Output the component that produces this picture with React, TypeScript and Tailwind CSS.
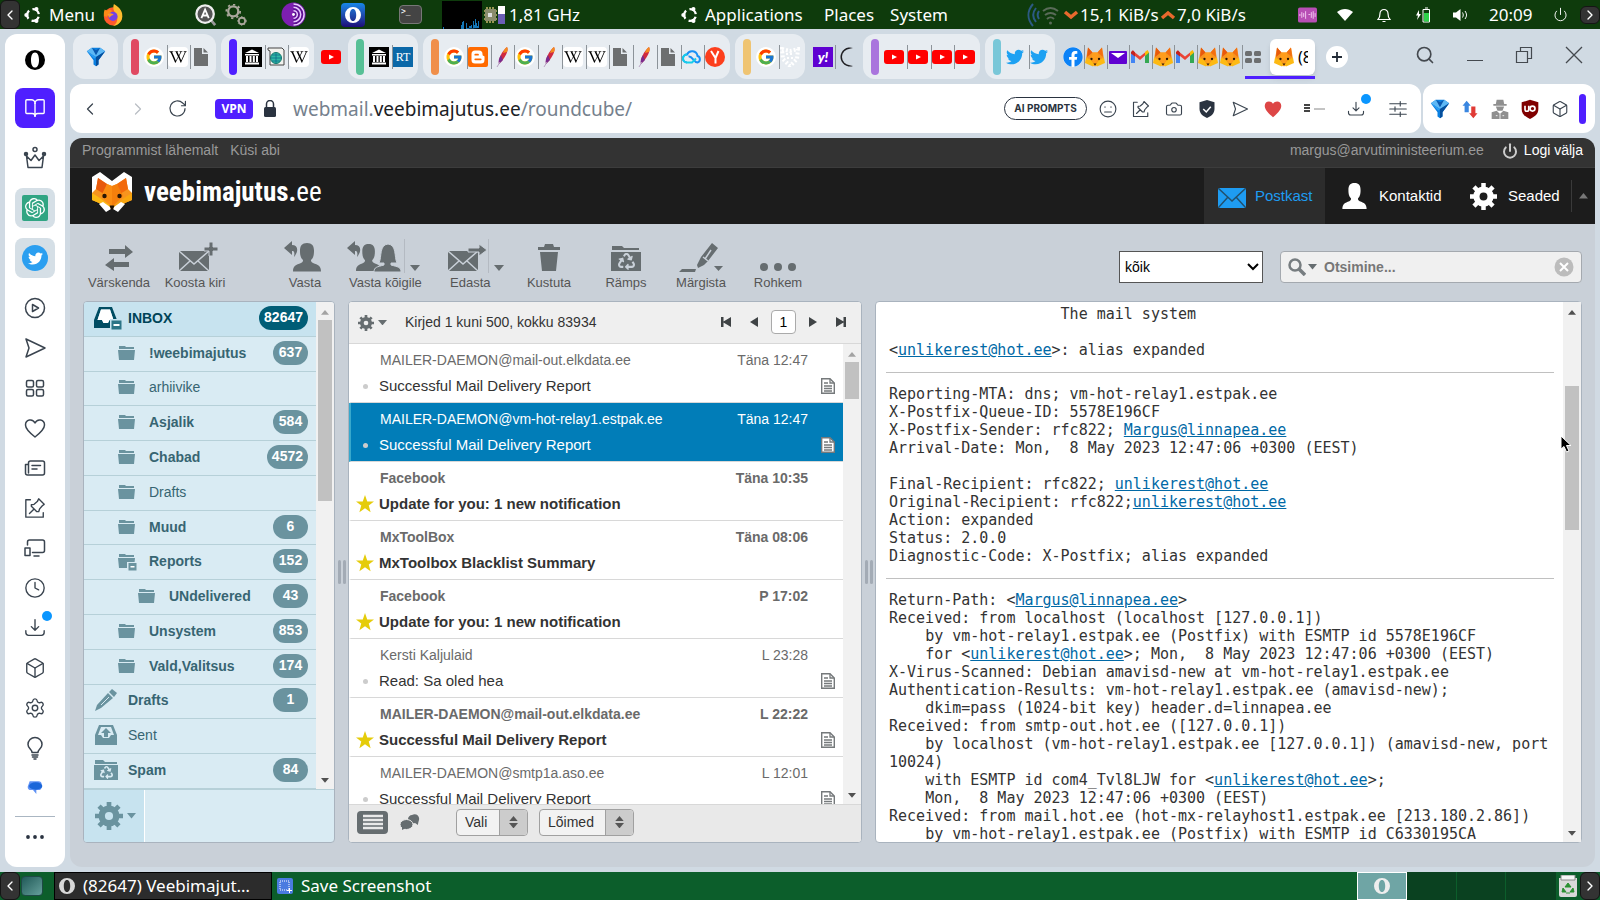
import clsx from "clsx"
import {
  BookOpen,
  Box,
  Camera,
  ChevronLeft,
  ChevronRight,
  Clock,
  Power,
  Search,
  Settings,
} from "lucide-react"
import type { FC, ReactNode } from "react"
import {
  FaFacebook,
  FaRecycle,
  FaTwitter,
  FaWikipediaW,
} from "react-icons/fa"
import { FcGoogle } from "react-icons/fc"
import { SiOpenai } from "react-icons/si"

type IconProps = { className?: string }

const Svg: FC<{ box?: string; className?: string; children: ReactNode }> = ({
  box = "0 0 24 24",
  className = "size-5",
  children,
}) => (
  <svg viewBox={box} className={clsx("shrink-0", className)} fill="none" aria-hidden>
    {children}
  </svg>
)

const Line: FC<{ className?: string; children: ReactNode }> = ({
  className = "size-6",
  children,
}) => (
  <Svg className={className}>
    <g
      stroke="currentColor"
      strokeWidth="1.5"
      strokeLinecap="round"
      strokeLinejoin="round"
    >
      {children}
    </g>
  </Svg>
)

// ---------- logos ----------

const Fox: FC<IconProps> = ({ className }) => (
  <Svg box="0 0 40 40" className={className}>
    <path d="M6 1 L15 11 H25 L34 1 L38 24 L20 39 L2 24Z" fill="#f7941e" />
    <path d="M6 1 L15 11 L4 20Z" fill="#e8590c" />
    <path d="M34 1 L25 11 L36 20Z" fill="#f36f10" />
    <path d="M15 11 H25 L28 22 L20 36 L12 22Z" fill="#ff9d1c" />
    <path d="M2 21 L12 26 L19 36 L16 39 L0 32Z" fill="#fdb913" />
    <path d="M38 21 L28 26 L21 36 L24 39 L40 32Z" fill="#fdb913" />
    <circle cx="13" cy="24" r="2.3" fill="#2a1605" />
    <circle cx="28" cy="24" r="2.3" fill="#2a1605" />
    <path d="M17 33 h6 l-3 4z" fill="#2a1605" />
  </Svg>
)

const FoxLogo = () => (
  <Svg box="0 0 40 40" className="size-10">
    <path d="M8 0 L20 9 L32 0 L40 5 V22 H0 V5Z" fill="#fff" />
    <path d="M6 6 L15 12 L20 14 L25 12 L34 6 L36 17 L40 21 V28 L33 31 L24 37 H16 L7 31 L0 28 V21 L4 17Z" fill="#f7941e" />
    <path d="M6 6 L15 12 L12 22 L4 17Z" fill="#e8590c" />
    <path d="M34 6 L25 12 L28 22 L36 17Z" fill="#f26a0c" />
    <path d="M15 12 L20 14 V35 L9 24Z" fill="#fb8d12" />
    <path d="M25 12 L20 14 V35 L31 24Z" fill="#f57f0c" />
    <path d="M0 21 L8 26 L20 35 L16 37 L7 31 L0 28Z" fill="#fdb913" />
    <path d="M40 21 L32 26 L20 35 L24 37 L33 31 L40 28Z" fill="#f9a60f" />
    <path d="M7 32 L11 30 L18 35 L19 37 L14 40Z M33 32 L29 30 L22 35 L21 37 L26 40Z" fill="#fff" />
    <circle cx="12.5" cy="24" r="2.2" fill="#2a1605" />
    <circle cx="27.5" cy="24" r="2.2" fill="#2a1605" />
    <path d="M17.500 33.500 h5 l-1.500 4 h-2z" fill="#1c1005" />
  </Svg>
)

const UbuntuMark = () => (
  <Svg box="0 0 20 20" className="size-[18px]">
    <circle
      cx="10"
      cy="10"
      r="6.5"
      stroke="#fff"
      strokeWidth="2.6"
      strokeDasharray="9.6 4"
      strokeDashoffset="-2"
    />
    <circle cx="2.6" cy="10" r="2.3" fill="#fff" />
    <circle cx="13.8" cy="3.4" r="2.3" fill="#fff" />
    <circle cx="13.8" cy="16.6" r="2.3" fill="#fff" />
  </Svg>
)

const Firefox = () => (
  <Svg className="size-[22px]">
    <circle cx="12" cy="13.5" r="10" fill="#ff5a2b" />
    <path d="M13 0 C20 4 23 9 22 15 C21 20 17 24 12 24 C19 20 17 12 14 9 C12 6 12 3 13 0Z" fill="#ffbd2e" />
    <path d="M3 6 C4 7 5 7 6 7 C8 5 10 6 11 8 L5 14 L2 13 C2 10 2 8 3 6Z" fill="#ff8a16" />
    <circle cx="12" cy="13.5" r="5" fill="#7542e5" />
    <path d="M6 11 C9 9 12 11 13 12 C10 12 9 14 8 15Z" fill="#ff9a2a" />
  </Svg>
)

const OperaRing: FC<IconProps & { color?: string }> = ({ className, color = "#000" }) => (
  <Svg box="0 0 20 20" className={className}>
    <path
      fillRule="evenodd"
      d="M10 0a10 10 0 1 0 0 20 10 10 0 0 0 0-20Zm0 2.4c2.7 0 4 3.4 4 7.6s-1.300 7.600-4 7.600-4-3.400-4-7.600 1.300-7.600 4-7.600Z"
      fill={color}
    />
  </Svg>
)

const Tor = () => (
  <Svg box="0 0 26 26" className="size-[25px]">
    <circle cx="13" cy="13" r="12.500" fill="#7d1fb0" />
    <path d="M13 .5a12.500 12.500 0 0 1 0 25Z" fill="#5d0f92" />
    <g stroke="#e9c8ff" strokeWidth="1.600">
      <path d="M13 5.500a7.500 7.500 0 0 1 0 15M13 9a4 4 0 0 1 0 8M13 2a11 11 0 0 1 0 22" />
    </g>
    <circle cx="13" cy="13" r="1.500" fill="#fff" />
  </Svg>
)

const BlueFunnel: FC<IconProps> = ({ className }) => (
  <Svg className={className}>
    <path d="M1 5 L7 1 H17 L23 5 L15 16 V21 L12 23 L9 21 V16Z" fill="#0a7fe0" />
    <path d="M1 5 L7 1 L12 6 L17 1 L23 5 L12 12Z" fill="#5db8f5" />
    <path d="M7 1 L12 4 L17 1 L12 10Z" fill="#0b5ab0" />
    <path d="M12 12 L23 5 L15 16 V21 L12 23Z" fill="#064f9c" />
    <path d="M1 5 L12 12 L10 14Z" fill="#2a9cf2" />
  </Svg>
)

const FileIcon = () => (
  <Svg box="0 0 20 20">
    <path d="M3 1 H11 V7 H17 V19 H3Z" fill="#6d6f70" />
    <path d="M12.500 1 L17 5.500 H12.500Z" fill="#6d6f70" />
  </Svg>
)

const Archive = () => (
  <Svg box="0 0 20 20">
    <path d="M0 0h20v20H0z" fill="#000" />
    <path
      d="M3 6 L10 2.500 L17 6Z M3 7h14v1.500H3z M4 9h2v6H4z M7.500 9h2v6h-2z M10.800 9h2v6h-2z M14 9h2v6h-2z M3 15.500h14V17.500H3z"
      fill="#fff"
    />
  </Svg>
)

const GlobeScroll = () => (
  <Svg box="0 0 20 20">
    <path d="M2 1h14l2 2v15H4V4L2 3z" fill="#f2f2ee" stroke="#444" />
    <circle cx="10" cy="11" r="5.500" fill="#2fb9a6" stroke="#15776b" />
    <path d="M4.500 11h11M10 5.500v11M6 8h8M6 14h8" stroke="#0d6a8a" strokeWidth=".8" />
  </Svg>
)

const Wiki = () => (
  <span className="flex size-5 items-center justify-center rounded bg-white text-black">
    <FaWikipediaW size={18} />
  </span>
)

const Google = () => (
  <span className="flex size-5 items-center justify-center rounded-full bg-white">
    <FcGoogle size={18} />
  </span>
)

const Rt = () => (
  <span className="flex size-5 items-center justify-center bg-[#0b68a8] font-['Liberation_Serif',serif] text-[12px] text-white">
    RT
  </span>
)

const Blogger = () => (
  <Svg box="0 0 20 20">
    <rect width="20" height="20" rx="2" fill="#ff6a00" />
    <path
      fillRule="evenodd"
      d="M7 3.500h4a3.500 3.500 0 0 1 3.500 3.500c0 1.500.4 1.700 1.300 1.900.5.100.7.4.7.9V13a3.500 3.500 0 0 1-3.500 3.500H7A3.500 3.500 0 0 1 3.500 13V7A3.500 3.500 0 0 1 7 3.500Zm.3 3.300a.9.9 0 0 0 0 1.800H10a.9.9 0 0 0 0-1.800Zm0 4.600a.9.9 0 0 0 0 1.800h5.400a.9.9 0 0 0 0-1.800Z"
      fill="#fff"
    />
  </Svg>
)

const Feather = () => (
  <Svg box="0 0 20 20">
    <path d="M15 0 C17 4 13 11 7 17 C6 12 10 4 15 0Z" fill="#d02a3f" />
    <path d="M15 0 C16 1 16 3 15 5 L11 6 C12 3 13 1 15 0Z" fill="#f58a1f" />
    <path d="M7 17 C6 14 7 11 9 8 L11 13Z" fill="#7b2a8c" />
    <path d="M8 15 L5 20" stroke="#b9a3c4" />
  </Svg>
)

const Cloud = () => (
  <Svg box="0 0 20 20">
    <path
      d="M5 15.500a4 4 0 0 1 0-8 5.500 5.500 0 0 1 10.500 1.500 3.400 3.400 0 0 1 0 6.500c-4 0-5-7-9-6"
      stroke="#1a90f5"
      strokeWidth="2"
    />
    <path d="M5 15.500a4 4 0 0 1 0-8M5 15.500h5l4-4" stroke="#16cdea" strokeWidth="2" />
  </Svg>
)

const Yandex = () => (
  <Svg box="0 0 20 20">
    <circle cx="10" cy="10" r="10" fill="#fc3f1d" />
    <path d="M6 4 L10.500 11 V16.500 M13.500 4 L10.500 11" stroke="#fff" strokeWidth="2" />
  </Svg>
)

const Dotted = () => (
  <Svg box="0 0 20 20">
    <path
      d="M2 2 L10 4 L18 2 L17 12 L10 19 L3 12Z"
      stroke="#fff"
      strokeWidth="4"
      strokeDasharray="2 2"
    />
    <path d="M6 7h8M7 11h6" stroke="#fff" strokeWidth="2" strokeDasharray="2 2" />
  </Svg>
)

const Yahoo = () => (
  <span className="flex size-5 items-center justify-center bg-[#5f01d1] font-['Lato',sans-serif] text-[14px] leading-5 font-black text-white italic">
    y!
  </span>
)

const Moon = () => (
  <Svg box="0 0 20 20">
    <path d="M17 1 A9.500 9.500 0 1 0 17 19 A9 9 0 0 1 17 1Z" fill="#1e1e22" />
    <circle cx="14" cy="10" r="8" fill="#d0dae3" />
  </Svg>
)

const Youtube = () => (
  <Svg box="0 0 20 20">
    <rect y="3" width="20" height="14" rx="3" fill="#f00" />
    <path d="M8 7.500 L13 10 L8 12.500Z" fill="#fff" />
  </Svg>
)

const Bird = () => <FaTwitter size={18} className="text-[#1da1f2]" />

const Facebook = () => (
  <span className="rounded-full bg-white">
    <FaFacebook size={20} className="text-[#0c82f6]" />
  </span>
)

const PurpleMail = () => (
  <Svg box="0 0 20 20">
    <rect x="1" y="4" width="18" height="13" rx="1" fill="#5f01d1" />
    <path d="M3 6 L10 11 L17 6Z" fill="#fff" />
  </Svg>
)

const Gmail = () => (
  <Svg box="0 0 20 20">
    <path d="M1 5v11h4V8z" fill="#4285f4" />
    <path d="M19 5v11h-4V8z" fill="#34a853" />
    <path d="M1 6 L2.500 3.500 L10 9.500 L17.500 3.500 L15 8.500 L10 13 L5 9Z" fill="#ea4335" />
    <path d="M15 5 L17.500 3 L19 5.500 L15 9Z" fill="#fbbc04" />
    <path d="M1 5 L3 3.300 L5 5.500 V9.500 L1 6.500Z" fill="#c5221f" />
  </Svg>
)

const Tiles = () => (
  <Svg box="0 0 20 20">
    <g fill="#6d6f70">
      <rect x="2" y="4" width="7" height="5" rx="1.500" />
      <rect x="11" y="4" width="7" height="5" rx="1.500" />
      <rect x="2" y="11" width="7" height="5" rx="1.500" />
      <rect x="11" y="11" width="7" height="5" rx="1.500" />
    </g>
  </Svg>
)

const SmallFox = () => <Fox className="size-5" />

// ---------- desktop panels ----------

const PanelHandle: FC<{ side: "left" | "right" }> = ({ side }) => (
  <button
    aria-label={side === "left" ? "Hide panel left" : "Hide panel right"}
    className="flex h-full w-5 shrink-0 items-center justify-center rounded-md border border-[#151515] bg-[#333] text-white"
  >
    {side === "left" ? <ChevronLeft size={16} /> : <ChevronRight size={16} />}
  </button>
)

const TopPanel = () => (
  <header className="flex h-[29px] shrink-0 items-center bg-[#0e3b0c] text-[17px] leading-6 whitespace-nowrap text-white">
    <PanelHandle side="left" />
    <button className="ml-1 flex items-center gap-1.5">
      <UbuntuMark />
      <span className="w-12">Menu</span>
    </button>
    <div className="ml-1.5 flex w-[336px] items-center justify-between">
      <Firefox />
      <span className="ml-9 flex items-center gap-2">
        <Svg className="size-[22px]">
          <path d="M17 17 L22 23" stroke="#999" strokeWidth="3" />
          <circle cx="11" cy="11" r="9.500" fill="#555" stroke="#eee" strokeWidth="2.500" />
          <path d="M7 15.500 L11 6 L15 15.500 M8.500 12.500 H13.500" stroke="#fff" strokeWidth="2" />
        </Svg>
        <Svg className="size-[22px]">
          <circle cx="9" cy="8" r="5.500" stroke="#aaa79c" strokeWidth="2.500" />
          <circle cx="9" cy="8" r="7.500" stroke="#aaa79c" strokeWidth="2" strokeDasharray="2.500 3.300" />
          <circle cx="18.500" cy="18.500" r="3.500" stroke="#aaa79c" strokeWidth="2" />
          <circle cx="18.500" cy="18.500" r="4.800" stroke="#aaa79c" strokeDasharray="1.500 2" />
        </Svg>
      </span>
      <Tor />
      <span className="flex size-6 items-center justify-center rounded bg-linear-to-b from-[#1687e8] to-[#1c0a78]">
        <OperaRing className="size-4" color="#fff" />
      </span>
      <span className="mr-4 h-[19px] w-[23px] rounded-sm border border-[#777] bg-[#444] pl-px font-['DejaVu_Sans_Mono',monospace] text-[8px] leading-3">
        &gt;_
      </span>
    </div>
    <Svg box="0 0 40 28" className="ml-1 h-7 w-10">
      <path d="M0 0h40v28H0z" fill="#000" />
      <path
        d="M1 28v-2h1v2M19 28v-4h1v-3h1v-1h1v8h2v-6h1v5h2v-2h2v-1h1v4h1v-8h1v4h1v-6h1v4h1v3h1v-5h1v7z"
        fill="#1477b8"
      />
    </Svg>
    <Svg box="0 0 24 20" className="ml-px h-5 w-6">
      <path d="M4 2v16M7 2v16M10 2v16M1 6h13M1 10h13M1 14h13" stroke="#c8b76a" strokeWidth="1.500" />
      <rect x="2" y="4" width="11" height="12" fill="#8a8c6c" />
      <rect x="5" y="8" width="4" height="4" fill="#ddd" />
      <rect x="15" y="1" width="7" height="18" fill="#fff" />
      <rect x="15" y="9" width="7" height="10" fill="#6b5fb5" />
    </Svg>
    <span className="ml-0.5 w-[172px]">1,81 GHz</span>
    <UbuntuMark />
    <nav className="ml-1.5 flex gap-4">
      <button className="w-[103px] text-left">Applications</button>
      <button>Places</button>
      <button>System</button>
    </nav>
    <div className="ml-auto flex items-center">
      <Svg box="0 0 34 24" className="mr-1 h-6 w-[34px]">
        <path d="M8 1C2 8 2 16 8 23M11 5c-4 5-4 9 0 14M14 8c-2 3-2 5 0 8" stroke="#2c5a84" strokeWidth="2" />
        <path d="M18 8c5-4 10-4 15 0M20 12c4-3 7-3 11 0M22 16c2-2 5-2 7 0" stroke="#5a6b59" strokeWidth="2" />
        <circle cx="25.500" cy="20" r="1.500" fill="#5a6b59" />
      </Svg>
      <Svg box="0 0 16 10" className="h-3 w-4">
        <path d="M2 2 L8 7 L14 2" stroke="#e8692d" strokeWidth="3.500" />
      </Svg>
      <span className="w-[81px] pl-px">15,1 KiB/s</span>
      <Svg box="0 0 16 10" className="h-3 w-4">
        <path d="M2 8 L8 3 L14 8" stroke="#e8692d" strokeWidth="3.500" />
      </Svg>
      <span className="w-[122px] pl-px">7,0 KiB/s</span>
      <Svg box="0 0 20 16" className="h-4 w-[19px]">
        <rect width="20" height="16" rx="2" fill="#b84fb5" />
        <path d="M2 7v2M4 5v6M6 6v4M8 4v8M11 7.500h2M14 5v6M16 4v8M18 6v4" stroke="#f3c9f0" />
      </Svg>
      <Svg box="0 0 16 12" className="ml-5 h-3 w-4">
        <path d="M0 3C5-1 11-1 16 3L8 12Z" fill="#fff" />
      </Svg>
      <Svg box="0 0 14 16" className="ml-6 h-4 w-3.5">
        <path d="M1 12.500h12c-2-2-2-3-2-6a4 4 0 0 0-8 0c0 3 0 4-2 6ZM5.500 14.500h3" stroke="#fff" strokeWidth="1.200" />
      </Svg>
      <Svg box="0 0 16 16" className="ml-6 size-4">
        <path d="M4 3 L1 8.500H3L2 13L6 7H4Z" fill="#fff" />
        <path d="M8 2.500h6.500v12.500H8z M10 1h3" stroke="#fff" />
        <path d="M9 6h5v8.500H9z" fill="#2fd14a" />
      </Svg>
      <Svg box="0 0 16 14" className="ml-[22px] h-3.5 w-4">
        <path d="M0 4.500h3L7.500 1v12L3 9.500H0z" fill="#fff" />
        <path d="M9.500 4.500c1 2 1 3 0 5M12 3c2 3 2 5 0 8" stroke="#fff" />
      </Svg>
      <time className="w-[84px] pl-5">20:09</time>
      <Power size={15} strokeWidth={1.500} className="mr-3" />
      <PanelHandle side="right" />
    </div>
  </header>
)

const BottomPanel = () => (
  <footer className="flex h-7 shrink-0 items-center bg-[#0c5e2b] text-[17px] leading-6 whitespace-nowrap text-white">
    <PanelHandle side="left" />
    <span className="ml-px h-5 w-[22px] rounded-sm border border-[#1e4a45] bg-linear-to-br from-[#1f5a58] to-[#66a09c]" />
    <button className="ml-[11px] flex h-full w-[218px] items-center gap-2 border border-black bg-[#2c2c2c] pl-1">
      <OperaRing className="size-4" color="#d8d8d8" />
      (82647) Veebimajut…
    </button>
    <button className="flex items-center gap-2 pl-[5px]">
      <Svg box="0 0 16 16" className="size-4">
        <rect width="16" height="16" rx="2" fill="#4a7be0" />
        <path d="M3 3h9v9H3z" stroke="#fff" strokeDasharray="1 1" />
        <path d="M12.500 10v5M10 12.500h5" stroke="#fff" />
      </Svg>
      Save Screenshot
    </button>
    <div className="ml-auto flex h-full items-center">
      <div className="flex h-full w-[50px] items-center justify-center border border-white bg-[#6fa5a5]">
        <OperaRing className="size-4" color="#eee" />
      </div>
      <div className="grid h-full w-[149px] grid-cols-3 divide-x divide-[#0c5e2b] bg-[#0a4120]">
        <span />
        <span />
        <span />
      </div>
      <Svg box="0 0 18 22" className="mx-[3px] h-[22px] w-[18px]">
        <path d="M0 3h18v17a2 2 0 0 1-2 2H2a2 2 0 0 1-2-2z" fill="#d9d9d9" />
        <path d="M2 0h14v5H2z" fill="#f6f6f6" stroke="#888" />
        <path d="M9 8l3 4H6zM4 13l-1 4h4zM14 13l1 4h-4zM7 18h4" fill="#2a9030" stroke="#2a9030" />
      </Svg>
      <PanelHandle side="right" />
    </div>
  </footer>
)

// ---------- browser chrome ----------

const IconStrip: FC<{ icons: FC[] }> = ({ icons }) => (
  <div className="flex min-w-0 flex-1 items-center">
    {icons.map((Item, i) => (
      <button
        key={i}
        aria-label={`Tab ${i + 1}`}
        className={clsx(
          "flex h-6 min-w-0 flex-1 items-center justify-between border-r",
          i === icons.length - 1 ? "border-transparent" : "border-[#8c9399]",
        )}
      >
        <Item />
      </button>
    ))}
  </div>
)

const TabGroup: FC<{ width: string; bar: string; icons: FC[] }> = ({
  width,
  bar,
  icons,
}) => (
  <div
    className={clsx(
      "flex h-[45px] shrink-0 items-center gap-[5px] rounded-xl bg-[#e7ecf1] pr-px pl-2",
      width,
    )}
  >
    <span className={clsx("h-9 w-2 shrink-0 rounded-sm", bar)} />
    <IconStrip icons={icons} />
  </div>
)

const TabBar = () => (
  <div className="flex h-[55px] shrink-0 items-center gap-[5px] pl-[3px]">
    <button
      aria-label="Pinned tab"
      className="flex h-[45px] w-[45px] items-center justify-center rounded-xl bg-[#e7ecf1]"
    >
      <BlueFunnel className="size-5" />
    </button>
    <TabGroup width="w-[93px]" bar="bg-[#e04a62]" icons={[Google, Wiki, FileIcon]} />
    <TabGroup width="w-[93px]" bar="bg-[#4f1fff]" icons={[Archive, GlobeScroll, Wiki]} />
    <div className="flex w-6 justify-center">
      <Youtube />
    </div>
    <TabGroup width="w-[70px]" bar="bg-[#57c096]" icons={[Archive, Rt]} />
    <TabGroup
      width="w-[307px]"
      bar="bg-[#f08f4a]"
      icons={[
        Google,
        Blogger,
        Feather,
        Google,
        Feather,
        Wiki,
        Wiki,
        FileIcon,
        Feather,
        FileIcon,
        Cloud,
        Yandex,
      ]}
    />
    <TabGroup width="w-[70px]" bar="bg-[#efc472]" icons={[Google, Dotted]} />
    <div className="flex w-12 shrink-0 pl-[3px]">
      <IconStrip icons={[Yahoo, Moon]} />
    </div>
    <TabGroup
      width="w-[117px]"
      bar="bg-[#a975dd]"
      icons={[Youtube, Youtube, Youtube, Youtube]}
    />
    <TabGroup width="w-[70px]" bar="bg-[#79c7d8]" icons={[Bird, Bird]} />
    <div className="flex w-[205px] shrink-0 pl-[3px]">
      <IconStrip
        icons={[
          Facebook,
          SmallFox,
          PurpleMail,
          Gmail,
          SmallFox,
          Gmail,
          SmallFox,
          SmallFox,
          Tiles,
        ]}
      />
    </div>
    <div className="relative">
      <button className="flex h-9 w-[45px] items-center gap-1 overflow-hidden rounded-md bg-white pl-1 font-['Noto_Sans',sans-serif] text-[16px] shadow-md">
        <SmallFox />
        <span className="w-2.5 overflow-hidden">(8</span>
      </button>
      <span className="absolute right-0 -bottom-1 h-[3px] w-[70px] bg-[#4f1fff]" />
    </div>
    <button
      aria-label="New tab"
      className="ml-1.5 flex size-[22px] items-center justify-center rounded-full bg-white"
    >
      <Svg box="0 0 10 10" className="size-2.5">
        <path d="M5 0v10M0 5h10" stroke="#222b36" strokeWidth="1.800" />
      </Svg>
    </button>
    <div className="ml-auto flex items-center gap-8 pr-3 pb-1 text-[#44494f]">
      <button aria-label="Search tabs">
        <Search size={20} strokeWidth={2} />
      </button>
      <button aria-label="Minimise" className="pt-3">
        <span className="block h-px w-4 bg-current" />
      </button>
      <button aria-label="Restore">
        <Svg box="0 0 18 18" className="size-[18px]">
          <path d="M1.500 5.500h11v11h-11zM5.500 5.500V1.500h11v11h-4" stroke="currentColor" strokeWidth="1.200" />
        </Svg>
      </button>
      <button aria-label="Close">
        <Svg box="0 0 18 18" className="size-[18px]">
          <path d="M1 1L17 17M17 1L1 17" stroke="currentColor" strokeWidth="1.300" />
        </Svg>
      </button>
    </div>
  </div>
)

const PinNote: FC<IconProps> = ({ className }) => (
  <Line className={className}>
    <path d="M7 3H2V22H21V17" />
    <path d="M16 2 L22 8 L20 9.500 L17 13 L16 16 L14 16 L8 10 L8 8.500 L11 8 L14.500 5Z M11 13 L6 18" />
  </Line>
)

const Plane: FC<IconProps> = ({ className }) => (
  <Line className={className}>
    <path d="M3 3 L22 12 L3 21 L6 12Z" />
  </Line>
)

const Download: FC<IconProps> = ({ className }) => (
  <span className="relative">
    <Line className={className}>
      <path d="M12 3V14M8 10.500L12 14.500L16 10.500M2 15V17a3 3 0 0 0 3 3H19a3 3 0 0 0 3-3V15" />
    </Line>
    <span className="absolute -top-1.5 -right-1.5 size-2.5 rounded-full bg-[#0a96ff]" />
  </span>
)

const toolbarIcons: { label: string; icon: ReactNode }[] = [
  {
    label: "Emoji",
    icon: (
      <Line className="size-[18px]">
        <circle cx="12" cy="12" r="10.500" />
        <path d="M7.500 16H16.500M8 9v.5M16 9v.5" />
      </Line>
    ),
  },
  { label: "Pinboard", icon: <PinNote className="size-[18px]" /> },
  { label: "Snapshot", icon: <Camera size={18} strokeWidth={1.500} /> },
  {
    label: "Tracker blocker",
    icon: (
      <Svg className="size-[18px]">
        <path d="M12 0 L22 3V12C22 18 17 22 12 24C7 22 2 18 2 12V3Z" fill="#2a3340" />
        <path d="M7 12L11 16L17 9" stroke="#fff" strokeWidth="2" />
      </Svg>
    ),
  },
  { label: "My Flow", icon: <Plane className="size-[18px]" /> },
  {
    label: "Bookmark",
    icon: (
      <Svg className="size-[18px]">
        <path d="M12 23C4 16 1 12 1 7.500C1 1 9 0 12 5C15 0 23 1 23 7.500C23 12 20 16 12 23Z" fill="#dd4646" />
      </Svg>
    ),
  },
]

const AddressBar = () => (
  <div className="flex h-[49px] shrink-0 gap-0.5">
    <div className="flex min-w-0 flex-1 items-center rounded-xl bg-white pr-0.5 pl-2.5 text-[#3a444f]">
      <button aria-label="Back" className="flex w-5 justify-center">
        <ChevronLeft size={20} strokeWidth={1.500} />
      </button>
      <button aria-label="Forward" className="ml-7 flex w-5 justify-center text-[#b9bec4]">
        <ChevronRight size={20} strokeWidth={1.500} />
      </button>
      <button aria-label="Reload" className="ml-5">
        <Line className="size-[19px]">
          <path d="M21.500 12A9.500 9.500 0 1 1 18.500 5L22 8M22 3V8.500H17" />
        </Line>
      </button>
      <button className="ml-7 h-5 w-[38px] rounded-sm bg-[#4f1fff] font-['Open_Sans',sans-serif] text-[12px] leading-5 font-bold text-white">
        VPN
      </button>
      <Svg box="0 0 12 17" className="ml-[11px] h-[17px] w-3">
        <path d="M2.500 8V4a3.500 3.500 0 0 1 7 0V8" stroke="#2a3340" strokeWidth="1.500" />
        <rect y="7" width="12" height="10" rx="1.500" fill="#2a3340" />
      </Svg>
      <span className="ml-[17px] flex-1 text-[19px] leading-7 whitespace-nowrap text-[#75818d]">
        webmail.<span className="text-[#1c2226]">veebimajutus.ee</span>/roundcube/
      </span>
      <button className="mr-1 h-[23px] w-[83px] rounded-full border border-[#2a3340] text-center font-['Inter',sans-serif] text-[10px] font-bold whitespace-nowrap text-[#2a3340]">
        AI PROMPTS
      </button>
      {toolbarIcons.map((item) => (
        <button
          key={item.label}
          aria-label={item.label}
          className="flex w-[33px] justify-center"
        >
          {item.icon}
        </button>
      ))}
      <button aria-label="Page preview" className="ml-1 flex w-[42px] justify-center">
        <Svg box="0 0 24 10" className="h-2.5 w-6">
          <path d="M2 1h6M2 4h6M2 7h6" stroke="#444" strokeWidth="2" />
          <path d="M12 5h11" stroke="#888" />
        </Svg>
      </button>
      <button aria-label="Downloads" className="flex w-[42px] justify-center">
        <Download className="size-[18px]" />
      </button>
      <button aria-label="Easy setup" className="flex w-[42px] justify-center">
        <Line className="size-[18px]">
          <path d="M1 5H23M1 12H23M1 19H23M15 2V8M8 9V15M15 16V22" />
        </Line>
      </button>
    </div>
    <div className="flex w-[172px] shrink-0 items-center rounded-xl bg-white pl-0.5 text-[#3a444f]">
      <button aria-label="Proxy" className="flex w-[30px] justify-center">
        <BlueFunnel className="size-5" />
      </button>
      <button aria-label="Transfers" className="flex w-[30px] justify-center">
        <Svg className="size-5">
          <path d="M8 2L13 8H10.500V16H5.500V8H3Z" fill="#3a86e0" />
          <path d="M16 23L11 17H13.500V9H18.500V17H21Z" fill="#e03a35" />
        </Svg>
      </button>
      <button aria-label="Agent" className="flex w-[30px] justify-center">
        <Svg className="size-5">
          <path d="M8 1h8l1 5h3v2H4V6h3zM7 9h10l-2 5H9zM2 16l6-2 4 4 4-4 6 2v8H2z" fill="#8f8f8f" />
          <path d="M12 18v6M7 20h2M15 20h2" stroke="#fff" />
        </Svg>
      </button>
      <button aria-label="uBlock Origin" className="flex w-[30px] justify-center">
        <Svg className="size-5">
          <path d="M12 1L22 4V12C22 18 18 21 12 24C6 21 2 18 2 12V4Z" fill="#800000" />
          <path d="M6 8v4.500a2 2 0 0 0 4.500 0V8" stroke="#fff" strokeWidth="2" />
          <circle cx="15" cy="11.500" r="3" stroke="#fff" strokeWidth="2" />
        </Svg>
      </button>
      <button aria-label="Extensions" className="flex w-[30px] justify-center">
        <Box size={18} strokeWidth={1.500} />
      </button>
      <span className="ml-1 h-[30px] w-[7px] rounded-sm bg-[#4f1fff]" />
    </div>
  </div>
)

const sideItems: { label: string; icon: ReactNode }[] = [
  {
    label: "Player",
    icon: (
      <Line className="size-6">
        <circle cx="12" cy="12" r="9.500" />
        <path d="M9.500 8.500L15.500 12L9.500 15.500Z" />
      </Line>
    ),
  },
  { label: "Flow", icon: <Plane className="size-6" /> },
  {
    label: "Speed dial",
    icon: (
      <Line>
        <rect x="3.500" y="4.500" width="7" height="6.500" rx="1.500" />
        <rect x="13.500" y="4.500" width="7" height="6.500" rx="1.500" />
        <rect x="3.500" y="13.500" width="7" height="6.500" rx="1.500" />
        <rect x="13.500" y="13.500" width="7" height="6.500" rx="1.500" />
      </Line>
    ),
  },
  {
    label: "Bookmarks",
    icon: (
      <Line>
        <path d="M12 21C5 15.500 2.500 12.500 2.500 9C2.500 3.500 9.500 2 12 7C14.500 2 21.500 3.500 21.500 9C21.500 12.500 19 15.500 12 21Z" />
      </Line>
    ),
  },
  {
    label: "News",
    icon: (
      <Line>
        <path d="M5.500 17V7a2 2 0 0 1 2-2H19.500a2 2 0 0 1 2 2V17a2 2 0 0 1-2 2H4.500a2 2 0 0 1-2-2V8.500H5.500M9 9.500H17.500M9 13H14" />
      </Line>
    ),
  },
  { label: "Pinboards", icon: <PinNote className="size-[22px]" /> },
  {
    label: "Devices",
    icon: (
      <Line>
        <path d="M4.500 9V6a2 2 0 0 1 2-2H19.500a2 2 0 0 1 2 2V14.500a2 2 0 0 1-2 2H9.500M11 20H16M2 12h5v7.500H2Z" />
      </Line>
    ),
  },
  { label: "History", icon: <Clock size={22} strokeWidth={1.500} /> },
  { label: "Downloads", icon: <Download className="size-[22px]" /> },
  { label: "Extensions", icon: <Box size={22} strokeWidth={1.500} /> },
  { label: "Settings", icon: <Settings size={22} strokeWidth={1.500} /> },
  {
    label: "Tips",
    icon: (
      <Line>
        <path d="M9 16.500C9 13.500 5 12.500 5 8.500a7 7 0 0 1 14 0c0 4-4 5-4 8ZM9 19H15M9.500 21H14.500M11 23H13" />
      </Line>
    ),
  },
  {
    label: "Chat",
    icon: (
      <Svg className="size-4">
        <path d="M4 2h13a5 5 0 0 1 5 5v3a5 5 0 0 1-5 5h-3v6l-5-6H6a5 5 0 0 1-5-5z" fill="#5f92f5" />
        <ellipse cx="13" cy="9" rx="10" ry="5.500" fill="#1b66d9" />
      </Svg>
    ),
  },
]

const Sidebar = () => (
  <aside className="m-[5px] flex w-[60px] shrink-0 flex-col items-center rounded-xl bg-white pt-4 text-[#3a444f]">
    <OperaRing className="size-5" />
    <button
      aria-label="Reader"
      className="mt-[18px] flex size-10 shrink-0 items-center justify-center rounded-lg bg-[#4f1fff] text-white"
    >
      <BookOpen size={22} strokeWidth={1.500} />
    </button>
    <button aria-label="Crown" className="mt-2.5 flex size-10 shrink-0 items-center justify-center">
      <Line>
        <path d="M3.500 10L5 21.500H19L20.500 10L16 14.500L12 9L8 14.500Z" />
        <circle cx="12" cy="3.500" r="2" />
        <circle cx="3" cy="8" r="1.500" fill="currentColor" />
        <circle cx="21" cy="8" r="1.500" fill="currentColor" />
      </Line>
    </button>
    <button
      aria-label="ChatGPT"
      className="mt-2.5 flex size-10 shrink-0 items-center justify-center rounded-lg bg-[#d5dfe6]"
    >
      <span className="flex size-[26px] items-center justify-center rounded-xs bg-[#31a583] text-white">
        <SiOpenai size={20} />
      </span>
    </button>
    <button
      aria-label="Twitter"
      className="mt-2.5 mb-2.5 flex size-10 shrink-0 items-center justify-center rounded-lg bg-[#d5dfe6]"
    >
      <span className="flex size-[26px] items-center justify-center rounded-full bg-[#2b9ff0] text-white">
        <FaTwitter size={15} />
      </span>
    </button>
    {sideItems.map((item) => (
      <button
        key={item.label}
        aria-label={item.label}
        className="flex size-10 shrink-0 items-center justify-center"
      >
        {item.icon}
      </button>
    ))}
    <hr className="mt-2 w-10 border-[#aab6c2]" />
    <button aria-label="Sidebar setup" className="mt-[18px]">
      <Svg box="0 0 20 4" className="h-1 w-5">
        <g fill="#2a3340">
          <circle cx="3" cy="2" r="1.900" />
          <circle cx="10" cy="2" r="1.900" />
          <circle cx="17" cy="2" r="1.900" />
        </g>
      </Svg>
    </button>
  </aside>
)

// ---------- webmail ----------

const Caret: FC<{ up?: boolean; className?: string }> = ({
  up,
  className = "w-2.5 text-[#666d70]",
}) => (
  <Svg box="0 0 10 6" className={className}>
    <path d={up ? "M0 6L5 0L10 6Z" : "M0 0L5 6L10 0Z"} fill="currentColor" />
  </Svg>
)

const Scrollbar: FC<{ top: string; thumb: string; atTop?: boolean }> = ({
  top,
  thumb,
  atTop,
}) => (
  <div className="flex w-[18px] shrink-0 flex-col items-center bg-[#f1f1f1] pt-2 pb-1.5">
    <Caret up className={clsx("w-2", atTop ? "text-[#a3a3a3]" : "text-[#505050]")} />
    <span className={clsx("w-3.5 bg-[#c1c1c1]", top, thumb)} />
    <Caret className="mt-auto w-2 text-[#505050]" />
  </div>
)

const Cog: FC<IconProps> = ({ className }) => (
  <Svg className={className}>
    <g fill="currentColor">
      <path d="M10 0h4v24h-4z" />
      <path d="M0 10h24v4H0z" />
      <path d="M2.100 4.900l2.800-2.800 17 17-2.800 2.800z" />
      <path d="M19.100 2.100l2.800 2.800-17 17-2.800-2.800z" />
    </g>
    <circle cx="12" cy="12" r="6" stroke="currentColor" strokeWidth="6" />
    <circle cx="12" cy="12" r="3.500" className="fill-(--hole)" />
  </Svg>
)

const Envelope = () => (
  <>
    <path d="M0 12h30v20H0z" fill="currentColor" />
    <path d="M0 12L15 25L30 12M0 32L11 22M30 32L19 22" stroke="#c9d0d8" strokeWidth="1.500" />
  </>
)

const person =
  "M0 30 C0 24 3 23 8 21 C10 20 10 19 10 18 C7 15 7 11 7 8 C7 3 9 0 14 0 C19 0 21 3 21 8 C21 11 21 15 18 18 C18 19 18 20 20 21 C25 23 28 24 28 30Z"

const ReplyArrow = () => (
  <path d="M0 9L8 2V6C14 6 15 12 10 18C11 13 10 12 8 12V16Z" fill="currentColor" />
)

type Tool = {
  label: string
  width: string
  icon: ReactNode
  // distance of the drop-down arrow from the tool's left edge
  menu?: string
}

const tools: Tool[] = [
  {
    label: "Värskenda",
    width: "w-[72px]",
    icon: (
      <Svg box="0 0 28 34" className="h-[34px] w-7">
        <path d="M4 10h16V6l8 7-8 6v-4H4zM24 23H9v-4l-9 7 9 6v-4h15z" fill="currentColor" />
      </Svg>
    ),
  },
  {
    label: "Koosta kiri",
    width: "w-20",
    icon: (
      <Svg box="0 0 40 34" className="ml-2 h-[34px] w-10">
        <Envelope />
        <path d="M30 3h4v5h5v4h-5v5h-4v-5h-5V8h5z" fill="currentColor" stroke="#c9d0d8" />
      </Svg>
    ),
  },
  {
    label: "Vasta",
    width: "ml-[34px] w-[72px]",
    icon: (
      <Svg box="0 0 38 34" className="mr-1 h-[34px] w-[38px]">
        <ReplyArrow />
        <g transform="translate(9 4) scale(1 .95)">
          <path d={person} fill="currentColor" />
        </g>
      </Svg>
    ),
  },
  {
    label: "Vasta kõigile",
    width: "ml-1.5 w-[85px]",
    menu: "left-[57px]",
    icon: (
      <Svg box="0 0 54 34" className="h-[34px] w-[54px]">
        <ReplyArrow />
        <g transform="translate(9 5) scale(.9)">
          <path d={person} fill="currentColor" />
        </g>
        <path
          d="M27 33C27 28 30 28 37 26V24H32C35 18 32 6 41 5C50 6 47 18 50 24H44V26C51 28 54 28 54 33Z"
          fill="currentColor"
          stroke="#c9d0d8"
        />
      </Svg>
    ),
  },
  {
    label: "Edasta",
    width: "ml-4 w-[60px]",
    menu: "left-10",
    icon: (
      <Svg box="0 0 40 34" className="h-[34px] w-10">
        <Envelope />
        <path d="M20 9h11V5l8 6-8 6v-4H20z" fill="currentColor" stroke="#c9d0d8" />
      </Svg>
    ),
  },
  {
    label: "Kustuta",
    width: "w-[82px]",
    icon: (
      <Svg box="0 0 22 34" className="h-[34px] w-[22px]">
        <path d="M0 11V8h6l1-3h8l1 3h6v3zM2 13h18l-2 19H4z" fill="currentColor" />
      </Svg>
    ),
  },
  {
    label: "Rämps",
    width: "w-[72px]",
    icon: (
      <span className="relative flex h-[34px] w-[30px] items-end justify-center">
        <Svg box="0 0 30 34" className="h-[34px] w-[30px]">
          <path d="M1 11V7h10l2 2h15v2H1zM0 13h30v19H0z" fill="currentColor" />
        </Svg>
        <FaRecycle size={17} className="absolute bottom-[3px] text-[#c9d0d8]" />
      </span>
    ),
  },
  {
    label: "Märgista",
    width: "w-[78px]",
    icon: (
      <Svg box="0 0 46 34" className="h-[34px] w-[46px]">
        <path
          d="M34 4L40 9L30 22L26 26L20 29L19 26L23 18ZM1 33L4 30H18L17 33Z"
          fill="currentColor"
        />
        <path d="M25 18L30 22M27 20L33 11" stroke="#c9d0d8" strokeWidth="1.500" />
        <path d="M36 27h9l-4.500 5z" fill="currentColor" />
      </Svg>
    ),
  },
  {
    label: "Rohkem",
    width: "w-[76px]",
    icon: (
      <Svg box="0 0 36 34" className="h-[34px] w-9">
        <g fill="currentColor">
          <circle cx="4" cy="28" r="4" />
          <circle cx="18" cy="28" r="4" />
          <circle cx="32" cy="28" r="4" />
        </g>
      </Svg>
    ),
  },
]

const Toolbar = () => (
  <div className="flex h-[77px] items-start">
    <div className="flex pt-[15px] text-[#666d70]">
      {tools.map((tool) => (
        <div key={tool.label} className={clsx("relative", tool.width)}>
          <button
            className={clsx(
              "flex w-full flex-col gap-px text-[13px] leading-[18px] whitespace-nowrap text-[#555]",
              tool.menu ? "items-start" : "items-center",
            )}
          >
            <span className="text-[#666d70]">{tool.icon}</span>
            <span className={clsx(tool.menu && "pl-0.5")}>{tool.label}</span>
          </button>
          {tool.menu && (
            <button
              aria-label={`${tool.label} menu`}
              className={clsx(
                "absolute top-0 flex h-[34px] w-5 items-end justify-center border-l border-[#b4bac2] pb-0.5",
                tool.menu,
              )}
            >
              <Caret />
            </button>
          )}
        </div>
      ))}
    </div>
    <div className="mt-[27px] ml-auto flex gap-[17px]">
      <div className="relative">
        <select
          aria-label="Filter"
          className="h-8 w-36 appearance-none border border-[#555] bg-white px-[5px] text-[14px] text-black"
        >
          <option>kõik</option>
        </select>
        <Svg box="0 0 12 8" className="pointer-events-none absolute top-3 right-1 h-2 w-3">
          <path d="M1 1L6 6L11 1" stroke="#000" strokeWidth="2" />
        </Svg>
      </div>
      <div className="flex h-8 w-[302px] items-center rounded border border-[#a4a9af] bg-[#f0f0f0] px-[7px]">
        <Svg box="0 0 18 18" className="size-[18px]">
          <circle cx="7" cy="7" r="5.500" stroke="#777d80" strokeWidth="2.500" />
          <path d="M11 11L17 17" stroke="#777d80" strokeWidth="3.500" />
        </Svg>
        <Caret className="ml-0.5 w-[9px] text-[#666d70]" />
        <input
          type="text"
          aria-label="Otsimine"
          placeholder="Otsimine..."
          className="min-w-0 flex-1 bg-transparent pl-[7px] text-[14px] font-bold placeholder:text-[#777]"
        />
        <button aria-label="Clear search">
          <Svg box="0 0 20 20">
            <circle cx="10" cy="10" r="9.500" fill="#bcbcbc" />
            <path d="M6 6L14 14M14 6L6 14" stroke="#fff" strokeWidth="2" />
          </Svg>
        </button>
      </div>
    </div>
  </div>
)

const FolderIcon: FC<{ collapsible?: boolean }> = ({ collapsible }) => (
  <Svg box="0 0 20 20">
    <path d="M2 5V3h6l1 1h8v2H2zM1 7h17l-1 10H2z" fill="#6a939f" />
    {collapsible && (
      <>
        <path d="M10 11h10v9H10z" fill="#d9ebf3" />
        <path d="M11.500 12h8v7.500h-8z" fill="#6a939f" />
        <path d="M13.500 15h4v1.500h-4z" fill="#fff" />
      </>
    )}
  </Svg>
)

const InboxIcon = () => (
  <Svg box="0 0 28 24" className="h-6 w-7">
    <path
      fillRule="evenodd"
      d="M5 1H18L23 14V22H0V14ZM7 3.500L3.500 14H8L9.500 17H14L15.500 14H19.500L16 3.500Z"
      fill="#004d63"
    />
    <path d="M7 3.500L3.500 14H8L9.500 17H14L15.500 14H19.500L16 3.500Z" fill="#fff" />
    <path d="M16 13h12v11H16z" fill="#c7e3ef" />
    <path d="M17.500 14.500h10v9h-10z" fill="#2c7486" />
    <path d="M19.500 18h6v2h-6z" fill="#fff" />
  </Svg>
)

const PencilIcon = () => (
  <Svg className="size-6">
    <path d="M18 1L23 5L20 9L15 4ZM14 5L19 10L7 20L1 23L3 17Z" fill="#6a939f" />
    <path d="M7 17L15 9" stroke="#d9ebf3" />
  </Svg>
)

const SentIcon = () => (
  <Svg className="size-6">
    <path d="M5 2H19L23 12V22H1V12Z" fill="#6a939f" />
    <path d="M7 4H17L20 12H17L15 15H9L7 12H4Z" fill="#d9ebf3" />
    <path d="M12 5L17 10H14V14H10V10H7Z" fill="#6a939f" />
  </Svg>
)

const SpamIcon = () => (
  <span className="relative flex size-6 items-end justify-center">
    <Svg className="size-6">
      <path d="M1 5V2h8l2 2h12v2H1zM0 7h24v15H0z" fill="#6a939f" />
    </Svg>
    <FaRecycle size={13} className="absolute bottom-[3px] text-[#d9ebf3]" />
  </span>
)

type Folder = { name: string; unread?: number; depth: 0 | 1 | 2; icon: ReactNode }

const folders: Folder[] = [
  { name: "INBOX", unread: 82647, depth: 0, icon: <InboxIcon /> },
  { name: "!weebimajutus", unread: 637, depth: 1, icon: <FolderIcon /> },
  { name: "arhiivike", depth: 1, icon: <FolderIcon /> },
  { name: "Asjalik", unread: 584, depth: 1, icon: <FolderIcon /> },
  { name: "Chabad", unread: 4572, depth: 1, icon: <FolderIcon /> },
  { name: "Drafts", depth: 1, icon: <FolderIcon /> },
  { name: "Muud", unread: 6, depth: 1, icon: <FolderIcon /> },
  { name: "Reports", unread: 152, depth: 1, icon: <FolderIcon collapsible /> },
  { name: "UNdelivered", unread: 43, depth: 2, icon: <FolderIcon /> },
  { name: "Unsystem", unread: 853, depth: 1, icon: <FolderIcon /> },
  { name: "Vald,Valitsus", unread: 174, depth: 1, icon: <FolderIcon /> },
  { name: "Drafts", unread: 1, depth: 0, icon: <PencilIcon /> },
  { name: "Sent", depth: 0, icon: <SentIcon /> },
  { name: "Spam", unread: 84, depth: 0, icon: <SpamIcon /> },
]

const indent = ["pl-[10px]", "pl-[33px]", "pl-[53px]"]

const FolderRow: FC<{ folder: Folder; selected: boolean }> = ({ folder, selected }) => (
  <li
    className={clsx(
      "min-h-0 flex-1 border-b border-[#b6d0d8]",
      selected && "bg-[#c7e3ef]",
    )}
  >
    <a
      href="#folder"
      className={clsx(
        "flex h-full items-center pr-2 pb-0.5 text-[14px] leading-5",
        indent[folder.depth],
        selected ? "text-[#004458]" : "text-[#376572]",
        folder.unread && "font-bold",
      )}
    >
      <span className={clsx("shrink-0", folder.depth ? "w-8" : "w-[34px]")}>
        {folder.icon}
      </span>
      {folder.name}
      {folder.unread && (
        <span
          className={clsx(
            "ml-auto h-6 min-w-[35px] rounded-xl px-[5px] text-center leading-[22px] text-white",
            selected ? "bg-[#005d76]" : "bg-[#6a939f]",
          )}
        >
          {folder.unread}
        </span>
      )}
    </a>
  </li>
)

const FolderPane = () => (
  <section className="flex w-[252px] shrink-0 flex-col overflow-hidden rounded border border-[#a9b3be] bg-[#d9ebf3]">
    <div className="flex min-h-0 flex-1">
      <ul className="flex flex-1 flex-col">
        {folders.map((folder, i) => (
          <FolderRow key={i} folder={folder} selected={i === 0} />
        ))}
      </ul>
      <Scrollbar top="mt-[5px]" thumb="h-[181px]" atTop />
    </div>
    <div className="h-[53px] border-t border-[#b6d0d8]">
      <button
        aria-label="Folder actions"
        className="flex h-full w-[61px] items-center gap-1 border-r border-white bg-[#c7e3ef] pl-[11px] text-[#6a939f] [--hole:#c7e3ef]"
      >
        <Cog className="size-7" />
        <Caret className="w-[9px] text-[#6a939f]" />
      </button>
    </div>
  </section>
)

type Message = {
  from: string
  date: string
  subject: string
  unread?: boolean
  report?: boolean
  selected?: boolean
}

const messages: Message[] = [
  {
    from: "MAILER-DAEMON@mail-out.elkdata.ee",
    date: "Täna 12:47",
    subject: "Successful Mail Delivery Report",
    report: true,
  },
  {
    from: "MAILER-DAEMON@vm-hot-relay1.estpak.ee",
    date: "Täna 12:47",
    subject: "Successful Mail Delivery Report",
    report: true,
    selected: true,
  },
  {
    from: "Facebook",
    date: "Täna 10:35",
    subject: "Update for you: 1 new notification",
    unread: true,
  },
  {
    from: "MxToolBox",
    date: "Täna 08:06",
    subject: "MxToolbox Blacklist Summary",
    unread: true,
  },
  {
    from: "Facebook",
    date: "P 17:02",
    subject: "Update for you: 1 new notification",
    unread: true,
  },
  { from: "Kersti Kaljulaid", date: "L 23:28", subject: "Read: Sa oled hea", report: true },
  {
    from: "MAILER-DAEMON@mail-out.elkdata.ee",
    date: "L 22:22",
    subject: "Successful Mail Delivery Report",
    unread: true,
    report: true,
  },
  {
    from: "MAILER-DAEMON@smtp1a.aso.ee",
    date: "L 12:01",
    subject: "Successful Mail Delivery Report",
    report: true,
  },
]

const MessageRow: FC<{ message: Message }> = ({ message }) => (
  <li
    className={clsx(
      "h-[59px] shrink-0 border-b border-l-2 border-b-[#d8d8d8] pt-1.5",
      message.selected ? "border-l-[#38a8cc] bg-[#017db8]" : "border-l-transparent",
      message.unread && "font-bold",
    )}
  >
    <div
      className={clsx(
        "flex justify-between pr-[35px] pl-[29px] text-[14px] leading-5",
        message.selected ? "text-white" : "text-[#6a6a6a]",
      )}
    >
      <span>{message.from}</span>
      <span>{message.date}</span>
    </div>
    <div
      className={clsx(
        "mt-1.5 flex items-center pr-2 text-[15px] leading-5",
        message.selected ? "text-white" : "text-[#333]",
      )}
    >
      <span className="flex w-7 justify-center">
        {message.unread ? (
          <Svg className="size-[18px]">
            <path d="M12 0L15 8.500H24L17 14L19.500 23L12 17.500L4.500 23L7 14L0 8.500H9Z" fill="#e5cc0a" />
          </Svg>
        ) : (
          <span className="size-[5px] rounded-full bg-[#ccc]" />
        )}
      </span>
      <a href="#message">{message.subject}</a>
      {message.report && (
        <Svg box="0 0 14 16" className="ml-auto h-4 w-3.5">
          <path d="M.7.700H9L13.300 5V15.300H.7Z" fill="#fff" stroke="#75797b" strokeWidth="1.400" />
          <path d="M9 1V5H13M3 5H7M3 8H11M3 10.500H11M3 13H11" stroke="#75797b" strokeWidth="1.300" />
        </Svg>
      )}
    </div>
  </li>
)

const PagerButton: FC<{ label: string; d: string }> = ({ label, d }) => (
  <button aria-label={label}>
    <Svg box="0 0 12 12" className="size-3">
      <path d={d} fill="#3f4345" />
    </Svg>
  </button>
)

const BoxedSelect: FC<{ label: string; width: string }> = ({ label, width }) => (
  <div className={clsx("relative h-[27px]", width)}>
    <select
      aria-label={label}
      className="h-full w-full appearance-none rounded border border-[#a0a0a0] bg-[#f2f2f2] pl-2 text-[14px] text-[#333]"
    >
      <option>{label}</option>
    </select>
    <span className="pointer-events-none absolute inset-y-px right-px flex w-7 flex-col items-center justify-center gap-0.5 rounded-r border-l border-[#a0a0a0] bg-[#ccc]">
      <Caret up className="w-[9px] text-[#555]" />
      <Caret className="w-[9px] text-[#555]" />
    </span>
  </div>
)

const MessagePane = () => (
  <section className="flex w-[514px] shrink-0 flex-col overflow-hidden rounded border border-[#a9b3be] bg-white">
    <div className="flex h-[42px] shrink-0 items-center border-b border-[#d8d8d8] bg-[#efefef] pr-3.5 pl-[9px]">
      <button
        aria-label="List options"
        className="flex items-center gap-1 text-[#666d70] [--hole:#efefef]"
      >
        <Cog className="size-4" />
        <Caret className="w-[9px] text-[#666d70]" />
      </button>
      <span className="ml-[18px] text-[14px] text-[#333]">Kirjed 1 kuni 500, kokku 83934</span>
      <div className="ml-auto flex items-center pb-0.5">
        <PagerButton label="First page" d="M1 1h2.500v4.500L11 1v10L3.500 6.500V11H1z" />
        <span className="w-4" />
        <PagerButton label="Previous page" d="M2 6L10 1V11Z" />
        <input
          aria-label="Page"
          defaultValue="1"
          className="mx-[11px] h-6 w-[25px] rounded border border-[#aaa] bg-white text-center text-[14px] text-black"
        />
        <PagerButton label="Next page" d="M10 6L2 1V11Z" />
        <span className="w-4" />
        <PagerButton label="Last page" d="M11 1H8.500v4.500L1 1v10l7.500-4.500V11H11z" />
      </div>
    </div>
    <div className="flex min-h-0 flex-1">
      <ul className="min-w-0 flex-1 overflow-hidden">
        {messages.map((message, i) => (
          <MessageRow key={i} message={message} />
        ))}
      </ul>
      <Scrollbar top="mt-[5px]" thumb="h-[37px]" atTop />
    </div>
    <div className="flex h-[38px] shrink-0 items-center border-t border-[#d8d8d8] bg-[#e9e9e9] pb-2 pl-2">
      <button
        aria-label="List view"
        className="mt-[5px] flex h-[23px] w-[31px] items-center justify-center rounded-sm bg-[#666d70]"
      >
        <Svg box="0 0 20 16" className="h-4 w-5">
          <path d="M0 2h20M0 6h20M0 10h20M0 14h20" stroke="#e9e9e9" strokeWidth="2.500" />
        </Svg>
      </button>
      <button aria-label="Threads" className="mt-[5px] ml-3">
        <Svg box="0 0 20 16" className="h-4 w-5">
          <path d="M12 1c4-2 8 1 7 5-.5 2-1 3-1 5l-3-2c-3 1-7-1-7-4 0-2 2-4 4-4Z" fill="#666d70" />
          <ellipse cx="6.500" cy="10.500" rx="6.500" ry="5" fill="#666d70" stroke="#e9e9e9" />
          <path d="M2 12v4l4-2z" fill="#666d70" />
        </Svg>
      </button>
      <div className="mt-[5px] ml-9 flex gap-[11px]">
        <BoxedSelect label="Vali" width="w-[72px]" />
        <BoxedSelect label="Lõimed" width="w-[95px]" />
      </div>
    </div>
  </section>
)

const Mail: FC<{ to: string }> = ({ to }) => (
  <a href={`mailto:${to}`} className="text-[#0069a6] underline">
    {to}
  </a>
)

const hot = <Mail to="unlikerest@hot.ee" />
const margus = <Mail to="Margus@linnapea.ee" />

const Pre: FC<{ children: ReactNode }> = ({ children }) => (
  <pre className="font-['DejaVu_Sans_Mono',monospace] text-[15px] leading-[18px] whitespace-pre-wrap text-[#333]">
    {children}
  </pre>
)

const Rule = () => <hr className="mt-[13px] mb-3 -ml-[3px] border-[#c0c0c0]" />

const PreviewPane = () => (
  <section className="relative flex min-w-0 flex-1 rounded border border-[#a9b3be] bg-white">
    <div className="min-w-0 flex-1 overflow-hidden pt-[3px] pr-[9px] pl-[13px]">
      <Pre>
        {"                   The mail system\n\n<"}
        {hot}
        {">: alias expanded"}
      </Pre>
      <Rule />
      <Pre>
        {"Reporting-MTA: dns; vm-hot-relay1.estpak.ee\n"}
        {"X-Postfix-Queue-ID: 5578E196CF\n"}
        {"X-Postfix-Sender: rfc822; "}
        {margus}
        {"\nArrival-Date: Mon,  8 May 2023 12:47:06 +0300 (EEST)\n\n"}
        {"Final-Recipient: rfc822; "}
        {hot}
        {"\nOriginal-Recipient: rfc822;"}
        {hot}
        {"\nAction: expanded\nStatus: 2.0.0\n"}
        {"Diagnostic-Code: X-Postfix; alias expanded"}
      </Pre>
      <Rule />
      <Pre>
        {"Return-Path: <"}
        {margus}
        {">\nReceived: from localhost (localhost [127.0.0.1])\n"}
        {"    by vm-hot-relay1.estpak.ee (Postfix) with ESMTP id 5578E196CF\n"}
        {"    for <"}
        {hot}
        {">; Mon,  8 May 2023 12:47:06 +0300 (EEST)\n"}
        {"X-Virus-Scanned: Debian amavisd-new at vm-hot-relay1.estpak.ee\n"}
        {"Authentication-Results: vm-hot-relay1.estpak.ee (amavisd-new);\n"}
        {"    dkim=pass (1024-bit key) header.d=linnapea.ee\n"}
        {"Received: from smtp-out.hot.ee ([127.0.0.1])\n"}
        {"    by localhost (vm-hot-relay1.estpak.ee [127.0.0.1]) (amavisd-new, port 10024)\n"}
        {"    with ESMTP id com4_Tvl8LJW for <"}
        {hot}
        {">;\n    Mon,  8 May 2023 12:47:06 +0300 (EEST)\n"}
        {"Received: from mail.hot.ee (hot-mx-relayhost1.estpak.ee [213.180.2.86])\n"}
        {"    by vm-hot-relay1.estpak.ee (Postfix) with ESMTP id C6330195CA"}
      </Pre>
    </div>
    <Scrollbar top="mt-[71px]" thumb="h-36" />
    <Svg box="0 0 12 18" className="absolute top-[133px] right-[9px] h-[18px] w-3">
      <path d="M1 1V14L4 11.500L6.500 17L9 16L6.500 10.500H11Z" fill="#000" stroke="#fff" />
    </Svg>
  </section>
)

const Splitter = () => (
  <div className="flex w-[13px] shrink-0 items-center justify-center gap-0.5">
    <span className="h-6 w-[3px] rounded-sm bg-[#a3abb5]" />
    <span className="h-6 w-[3px] rounded-sm bg-[#a3abb5]" />
  </div>
)

const MailHeader = () => (
  <>
    <div className="flex h-[29px] shrink-0 items-center bg-[#333] px-3 pb-1 text-[14px] text-[#999]">
      <a href="#about">Programmist lähemalt</a>
      <a href="#help" className="ml-3">
        Küsi abi
      </a>
      <span className="ml-auto">margus@arvutiministeerium.ee</span>
      <button className="ml-[18px] flex items-center gap-1.5 text-white">
        <Power size={16} strokeWidth={3} className="text-[#ccc]" />
        Logi välja
      </button>
    </div>
    <div className="flex h-[57px] shrink-0 border-t border-[#3c3c3c] bg-[#1c1c1c]">
      <div className="flex items-center gap-3 pb-2 pl-[22px]">
        <FoxLogo />
        <span className="font-['Roboto_Condensed','Roboto',sans-serif] text-[27px] leading-8 font-bold text-white">
          veebimajutus.<span className="font-normal">ee</span>
        </span>
      </div>
      <nav className="ml-auto flex text-[15px] text-white">
        <a href="#mail" className="flex w-[121px] items-center gap-[9px] bg-[#2c2c2c] pl-3.5 text-[#1e9cf2]">
          <Svg box="0 0 28 20" className="mt-1 h-5 w-7">
            <path d="M0 0h28v20H0z" fill="#1e9cf2" />
            <path d="M0 0L14 13L28 0M0 20L10 9M28 20L18 9" stroke="#22506e" strokeWidth="1.500" />
          </Svg>
          Postkast
        </a>
        <a href="#contacts" className="flex w-[130px] items-center gap-3 pl-[17px]">
          <Svg box="0 0 28 30" className="h-[26px] w-[25px]">
            <path d={person} fill="#fff" />
          </Svg>
          Kontaktid
        </a>
        <a
          href="#settings"
          className="flex w-[116px] items-center gap-[11px] pl-[15px] [--hole:#1c1c1c]"
        >
          <Cog className="size-[27px]" />
          Seaded
        </a>
        <button
          aria-label="Collapse header"
          className="my-3 flex w-6 items-center justify-center border-l border-[#3a3a3a]"
        >
          <Caret up className="w-[9px] text-[#777]" />
        </button>
      </nav>
    </div>
  </>
)

const Webmail = () => (
  <main className="mt-[5px] flex min-h-0 flex-1 flex-col overflow-hidden rounded-xl bg-[#c9d0d8] font-['Liberation_Sans',sans-serif]">
    <MailHeader />
    <div className="flex min-h-0 flex-1 flex-col px-[13px] pb-6">
      <Toolbar />
      <div className="flex min-h-0 flex-1">
        <FolderPane />
        <Splitter />
        <MessagePane />
        <Splitter />
        <PreviewPane />
      </div>
    </div>
  </main>
)

export default function App() {
  return (
    <div className="flex h-screen min-h-[900px] min-w-[1600px] flex-col overflow-hidden bg-[#d0dae3] font-['Noto_Sans',sans-serif]">
      <TopPanel />
      <div className="flex min-h-0 flex-1">
        <Sidebar />
        <div className="flex min-w-0 flex-1 flex-col pr-[5px] pb-[5px]">
          <TabBar />
          <AddressBar />
          <Webmail />
        </div>
      </div>
      <BottomPanel />
    </div>
  )
}
